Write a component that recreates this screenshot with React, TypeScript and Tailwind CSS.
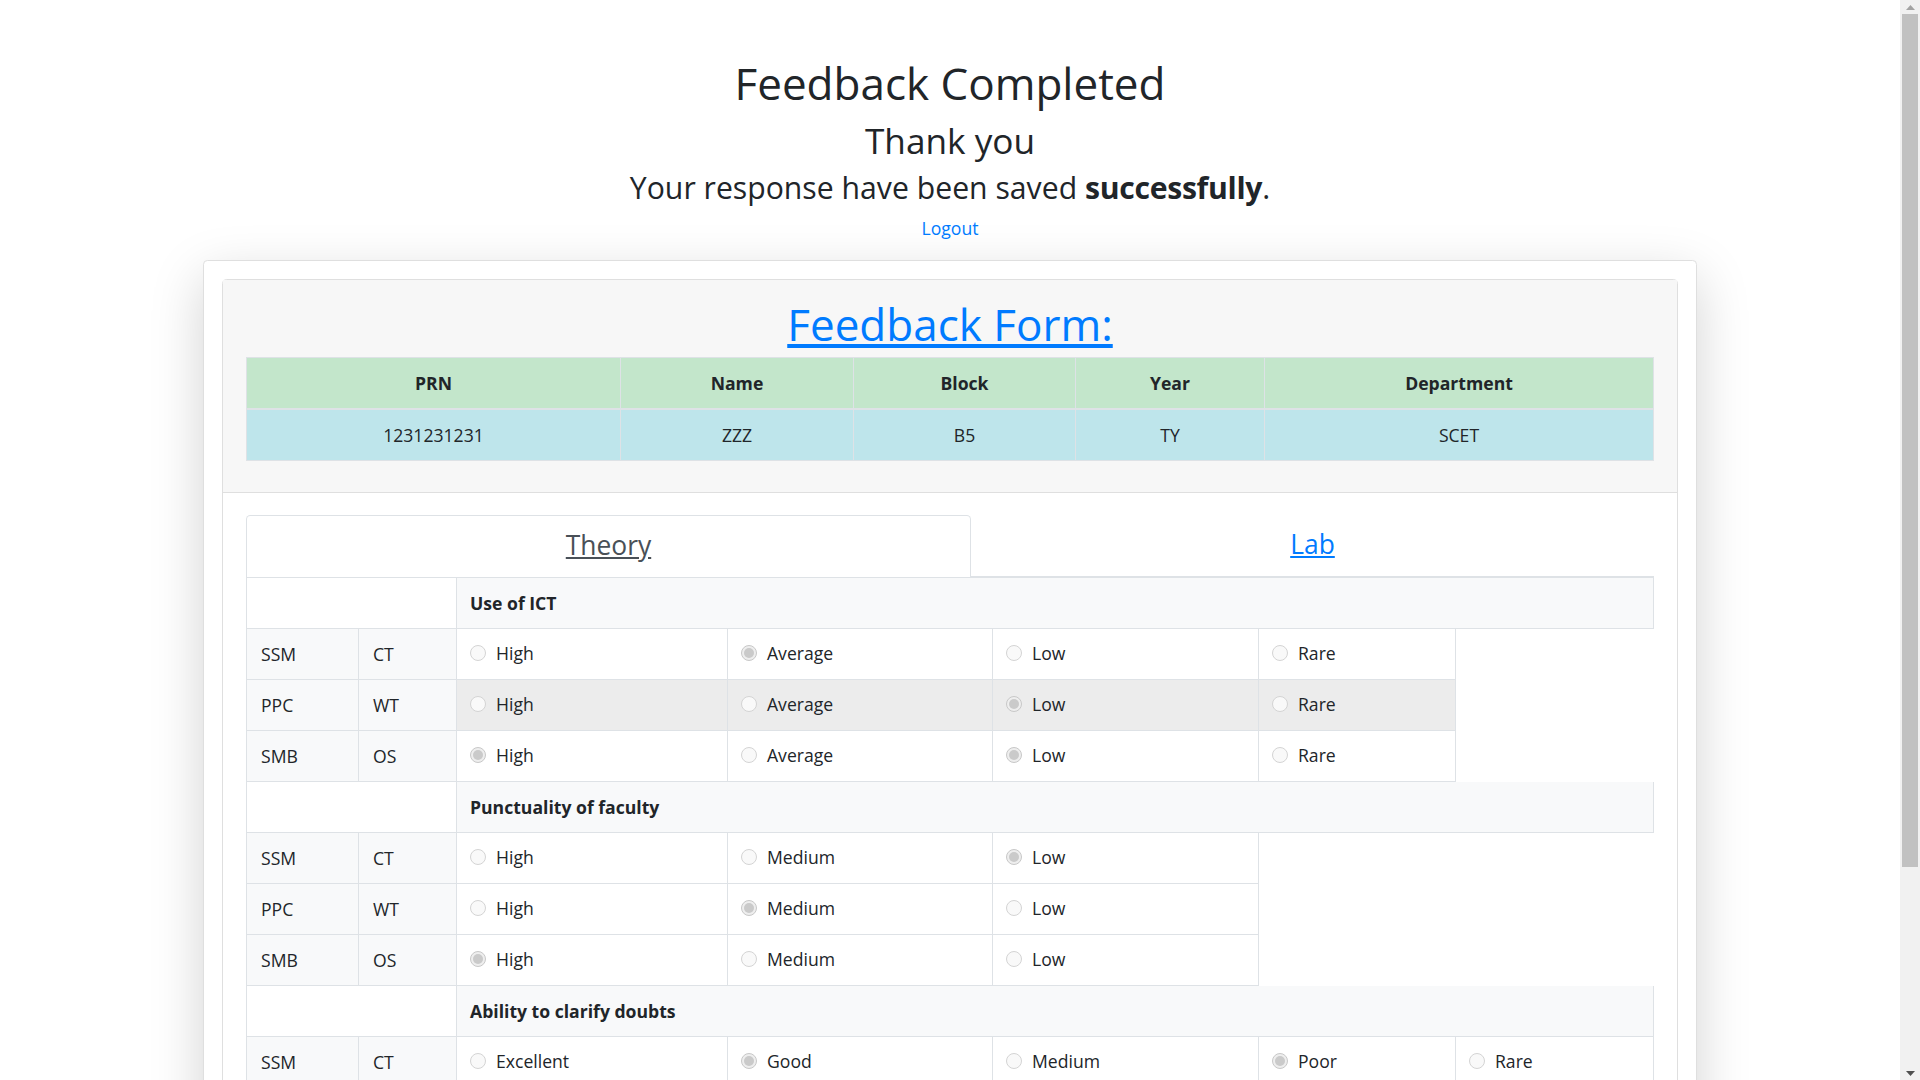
import React from "react";

type Row = { a: string; b: string; checked: number[]; hover?: boolean };
type Section = { title: string; options: string[]; rows: Row[] };

const sections: Section[] = [
  {
    title: "Use of ICT",
    options: ["High", "Average", "Low", "Rare"],
    rows: [
      { a: "SSM", b: "CT", checked: [1] },
      { a: "PPC", b: "WT", checked: [2], hover: true },
      { a: "SMB", b: "OS", checked: [0, 2] },
    ],
  },
  {
    title: "Punctuality of faculty",
    options: ["High", "Medium", "Low"],
    rows: [
      { a: "SSM", b: "CT", checked: [2] },
      { a: "PPC", b: "WT", checked: [1] },
      { a: "SMB", b: "OS", checked: [0] },
    ],
  },
  {
    title: "Ability to clarify doubts",
    options: ["Excellent", "Good", "Medium", "Poor", "Rare"],
    rows: [
      { a: "SSM", b: "CT", checked: [1, 3] },
      { a: "PPC", b: "WT", checked: [1] },
      { a: "SMB", b: "OS", checked: [0] },
    ],
  },
];

const ratingWidths = ["w-[271px]", "w-[265px]", "w-[266px]", "w-[197px]", "w-[198px]"];

function Radio({ checked }: { checked: boolean }) {
  return checked ? (
    <span className="flex h-[16px] w-[16px] shrink-0 items-center justify-center rounded-full border border-[#c8c8c8] bg-[#eeeeee]">
      <span className="h-[10px] w-[10px] rounded-full bg-[#cacaca]" />
    </span>
  ) : (
    <span className="h-[16px] w-[16px] shrink-0 rounded-full border border-[#d4d4d4] bg-[#f9f9f9]" />
  );
}

function SectionRow({ title }: { title: string }) {
  return (
    <div className="flex h-[51px]">
      <div className="w-[211px] border-l border-r border-b border-[#dee2e6] bg-white" />
      <div className="flex flex-1 items-center border-r border-b border-[#dee2e6] bg-[#f8f9fa] pl-[13px] pb-[1px] font-bold">
        {title}
      </div>
    </div>
  );
}

function DataRow({ row, options }: { row: Row; options: string[] }) {
  return (
    <div className="flex h-[51px]">
      <div className="flex w-[113px] items-center border-l border-r border-b border-[#dee2e6] bg-[#f8f9fa] pl-[14px]">
        {row.a}
      </div>
      <div className="flex w-[98px] items-center border-r border-b border-[#dee2e6] bg-[#f8f9fa] pl-[14px]">
        {row.b}
      </div>
      {options.map((o, i) => (
        <div
          key={o}
          className={`${ratingWidths[i]} flex items-center border-r border-b border-[#dee2e6] pl-[13px] pb-[3px] ${
            row.hover ? "bg-[#ececec]" : "bg-white"
          }`}
        >
          <Radio checked={row.checked.includes(i)} />
          <span className="ml-[10px]">{o}</span>
        </div>
      ))}
    </div>
  );
}

function Scrollbar() {
  return (
    <div className="flex h-full w-[20px] shrink-0 flex-col items-center bg-[#f1f1f1]">
      <div className="flex h-[14px] w-full items-center justify-center">
        <svg width="9" height="5" viewBox="0 0 9 5">
          <path d="M0 5 L4.5 0 L9 5 Z" fill="#a3a3a3" />
        </svg>
      </div>
      <div className="h-[853px] w-[16px] bg-[#c1c1c1]" />
      <div className="flex-1" />
      <div className="flex h-[14px] w-full items-center justify-center">
        <svg width="9" height="5" viewBox="0 0 9 5">
          <path d="M0 0 L4.5 5 L9 0 Z" fill="#505050" />
        </svg>
      </div>
    </div>
  );
}

export default function App() {
  const infoCols = [
    { w: "w-[374px]", h: "PRN", v: "1231231231" },
    { w: "w-[233px]", h: "Name", v: "ZZZ" },
    { w: "w-[222px]", h: "Block", v: "B5" },
    { w: "w-[189px]", h: "Year", v: "TY" },
    { w: "w-[389px]", h: "Department", v: "SCET" },
  ];

  return (
    <div className="flex h-screen w-full overflow-hidden bg-white font-['Open_Sans',sans-serif] text-[17.6px] leading-[1.5] text-[#212529]">
      <main className="h-full flex-1 overflow-hidden">
        <div className="flex flex-col items-center pt-[57px] text-center">
          <h1 className="mb-[9px] text-[44px] font-normal leading-[1.2]">Feedback Completed</h1>
          <h2 className="mb-[9px] text-[35.2px] font-normal leading-[1.2]">Thank you</h2>
          <h3 className="mb-[9px] text-[30.2px] font-normal leading-[1.2]">
            Your response have been saved{" "}
            <b className="font-bold tracking-[-0.3px]">successfully</b>.
          </h3>
          <a href="#" className="text-[#007bff]">
            Logout
          </a>
        </div>

        <div className="mx-auto mt-[18px] w-[1494px] rounded-[4.4px] border border-[#dfdfdf] bg-white p-[18px] shadow-[0_17.6px_52.8px_rgba(0,0,0,0.175)]">
          <div className="rounded-[4.4px] border border-[#dfdfdf]">
            <div className="border-b border-[#dfdfdf] bg-[#f7f7f7] px-[23px] pt-[18px] pb-[31px]">
              <h1 className="mb-[7px] text-center text-[44px] font-normal leading-[1.2]">
                <a href="#" className="text-[#007bff] underline">
                  Feedback Form:
                </a>
              </h1>
              <div className="border-t border-l border-[#dee2e6]">
                <div className="flex h-[52px] bg-[#c3e6cb] font-bold">
                  {infoCols.map((c) => (
                    <div
                      key={c.h}
                      className={`${c.w} flex items-center justify-center border-r border-b-2 border-[#dee2e6]`}
                    >
                      {c.h}
                    </div>
                  ))}
                </div>
                <div className="flex h-[51px] bg-[#bee5eb]">
                  {infoCols.map((c) => (
                    <div
                      key={c.h}
                      className={`${c.w} flex items-center justify-center border-r border-b border-[#dee2e6]`}
                    >
                      {c.v}
                    </div>
                  ))}
                </div>
              </div>
            </div>

            <div className="bg-white px-[23px] pt-[22px] pb-[22px]">
              <div className="flex h-[62px]">
                <div className="flex w-[725px] items-center justify-center rounded-t-[4.4px] border border-b-0 border-[#dee2e6] bg-white pb-[3px] text-[26.4px] text-[#495057] underline">
                  Theory
                </div>
                <div className="flex flex-1 items-center justify-center border-b border-[#dee2e6] pb-[2px] text-[26.4px] text-[#007bff] underline">
                  Lab
                </div>
              </div>
              <div className="w-[1408px] border-t border-[#dee2e6]">
                {sections.map((s) => (
                  <React.Fragment key={s.title}>
                    <SectionRow title={s.title} />
                    {s.rows.map((r) => (
                      <DataRow key={r.a} row={r} options={s.options} />
                    ))}
                  </React.Fragment>
                ))}
              </div>
            </div>
          </div>
        </div>
      </main>
      <Scrollbar />
    </div>
  );
}
